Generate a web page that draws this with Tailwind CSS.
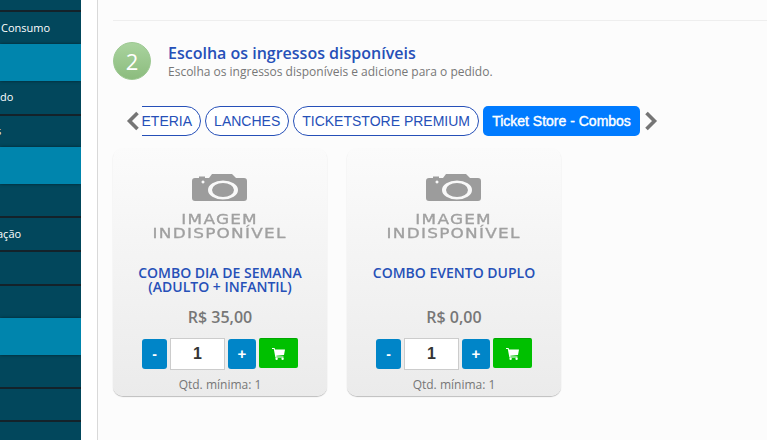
<!DOCTYPE html>
<html lang="en">

<head>
    <meta charset="UTF-8">
    <title>Ingressos</title>
    <script src="https://cdn.jsdelivr.net/npm/@tailwindcss/browser@4"></script>
</head>

<body class="bg-white font-['Open_Sans',sans-serif] overflow-hidden">
    <div class="flex w-[767px] h-[440px] overflow-hidden">

        <!-- Sidebar -->
        <div class="w-[81px] h-[440px] shrink-0 flex flex-col bg-[#02475c] text-white text-[11px] overflow-hidden">
            <div class="h-[10px] shrink-0"></div>
            <div class="h-[34px] shrink-0 border-t-2 border-[#14222a] flex items-center whitespace-nowrap pt-[1px]"><span class="ml-[1px]">Consumo</span></div>
            <div class="h-[37px] shrink-0 bg-[#0085ad] shadow-[0_0_3px_rgba(0,0,0,0.5)]"></div>
            <div class="h-[33px] shrink-0 flex items-center justify-start"><span>do</span></div>
            <div class="h-[33px] shrink-0 border-t-2 border-[#14222a] flex items-center"><span class="-ml-[4px]">s</span></div>
            <div class="h-[37px] shrink-0 bg-[#0085ad] shadow-[0_0_3px_rgba(0,0,0,0.5)]"></div>
            <div class="h-[32px] shrink-0"></div>
            <div class="h-[34px] shrink-0 border-t-2 border-[#14222a] flex items-center"><span class="-ml-[3px]">ação</span></div>
            <div class="h-[34px] shrink-0 border-t-2 border-[#14222a]"></div>
            <div class="h-[34px] shrink-0 border-t-2 border-[#14222a]"></div>
            <div class="h-[37px] shrink-0 bg-[#0085ad] shadow-[0_0_3px_rgba(0,0,0,0.5)]"></div>
            <div class="h-[32px] shrink-0"></div>
            <div class="h-[33px] shrink-0 border-t-2 border-[#14222a]"></div>
            <div class="flex-1 border-t-2 border-[#14222a]"></div>
        </div>

        <!-- Gutter -->
        <div class="w-[16px] shrink-0 bg-white"></div>

        <!-- Content -->
        <div class="flex-1 min-w-0 bg-[#fcfcfc] border-l border-[#d9d9d9] pl-[15px]">
            <div class="h-[21px] border-b border-[#eeeeee]"></div>

            <!-- Step header -->
            <div class="flex items-center gap-[17px] mt-[21px] h-[38px]">
                <div class="w-[38px] h-[38px] shrink-0 rounded-full bg-gradient-to-b from-[#a9d39e] to-[#8cbc7e] border border-[#9cc891] flex items-center justify-center text-white text-[22px]">2</div>
                <div class="pt-[1px]">
                    <h2 class="text-[16px] leading-[20px] font-semibold text-[#2650b8] whitespace-nowrap">Escolha os ingressos disponíveis</h2>
                    <p class="text-[12px] leading-[17px] text-[#777777] whitespace-nowrap">Escolha os ingressos disponíveis e adicione para o pedido.</p>
                </div>
            </div>

            <!-- Tabs -->
            <div class="flex items-center mt-[26px] h-[30px] font-['Liberation_Sans',sans-serif] text-[14px]">
                <svg class="w-[14px] h-[20px] ml-[13px] shrink-0" viewBox="0 0 14 20" fill="none" stroke="#757575" stroke-width="3.6"><path d="M11.5 2 L3.5 10 L11.5 18" /></svg>
                <div class="w-[498px] ml-[2px] shrink-0 flex justify-end gap-[4px] overflow-hidden">
                    <span class="shrink-0 h-[30px] px-[8px] flex items-center rounded-full border border-[#2650b8] text-[#2650b8] bg-white">CAFETERIA</span>
                    <span class="shrink-0 h-[30px] px-[8px] flex items-center rounded-full border border-[#2650b8] text-[#2650b8] bg-white">LANCHES</span>
                    <span class="shrink-0 h-[30px] px-[8px] flex items-center rounded-full border border-[#2650b8] text-[#2650b8] bg-white">TICKETSTORE PREMIUM</span>
                    <span class="shrink-0 h-[30px] w-[157px] justify-center flex items-center rounded-[5px] bg-[#007bff] text-white [-webkit-text-stroke:0.4px_#ffffff]">Ticket Store - Combos</span>
                </div>
                <svg class="w-[14px] h-[20px] ml-[4px] shrink-0" viewBox="0 0 14 20" fill="none" stroke="#757575" stroke-width="3.6"><path d="M2.5 2 L10.5 10 L2.5 18" /></svg>
            </div>

            <!-- Cards -->
            <div class="flex gap-[20px] mt-[12px]">
                <div class="w-[214px] h-[248px] shrink-0 rounded-[10px] bg-gradient-to-b from-[#fbfbfb] to-[#ebebeb] shadow-[0_1px_1px_rgba(0,0,0,0.25)] flex flex-col items-center">
                    <div class="h-[102px] pt-[26px] flex flex-col items-center text-[#a0a0a0] blur-[0.4px] font-['DejaVu_Sans',sans-serif] [-webkit-text-stroke:0.3px_#a0a0a0]">
                        <svg class="w-[55px] h-[27px]" viewBox="0 0 55 27"><path fill="#9c9c9c" fill-rule="evenodd" d="M3 4 H7 V2.5 H13 V4 H17 L20 0 H40 L44 4 H52 Q55 4 55 7 V24 Q55 27 52 27 H3 Q0 27 0 24 V7 Q0 4 3 4 Z M31 6.5 A15 9.5 0 1 0 31 25.500 A15 9.500 0 1 0 31 6.500 Z M31 9 A11 7 0 1 1 31 23 A11 7 0 1 1 31 9 Z M11 6.500 a1.500 1.500 0 1 0 0.010 0 Z" /></svg>
                        <span class="mt-[11px] text-[13.5px] leading-[14px] tracking-[1px] scale-x-[1.25]">IMAGEM</span>
                        <span class="text-[13.5px] leading-[15px] tracking-[1px] whitespace-nowrap scale-x-[1.25]">INDISPONÍVEL</span>
                    </div>
                    <h3 class="mt-[16px] h-[28px] w-full text-center text-[14px] leading-[14px] font-semibold text-[#2650b8]">COMBO DIA DE SEMANA<br>(ADULTO + INFANTIL)</h3>
                    <p class="mt-[12px] h-[22px] text-[16px] leading-[22px] font-semibold text-[#777777]">R$ 35,00</p>
                    <div class="flex items-start gap-[3px] mt-[10px] h-[32px] font-['Liberation_Sans',sans-serif]">
                        <button class="w-[25px] h-[30px] mt-[1px] rounded-[3px] bg-[#0085c8] text-white text-[14px] font-bold">-</button>
                        <input class="w-[55px] h-[32px] border border-[#cccccc] bg-white text-center text-[16px] font-bold text-[#333333]" value="1">
                        <button class="w-[28px] h-[30px] mt-[1px] rounded-[3px] bg-[#0085c8] text-white text-[15px] font-bold">+</button>
                        <button class="w-[39px] h-[30px] rounded-[2px] bg-[#00c000] border-t border-[#00a800] flex items-center justify-center">
                            <svg class="w-[13px] h-[12px]" viewBox="0 0 13 12" fill="#ffffff"><path d="M0 0 H2.600 L3 1.500 H13 L12 7 L4.300 7.800 L4.500 8.500 H11.500 V9.500 H3.400 L1.800 1 H0 Z" /><circle cx="4.600" cy="10.800" r="1.200" /><circle cx="10.600" cy="10.800" r="1.200" /></svg>
                        </button>
                    </div>
                    <p class="mt-[7px] text-[12px] leading-[16px] text-[#777777]">Qtd. mínima: 1</p>
                </div>

                <div class="w-[214px] h-[248px] shrink-0 rounded-[10px] bg-gradient-to-b from-[#fbfbfb] to-[#ebebeb] shadow-[0_1px_1px_rgba(0,0,0,0.25)] flex flex-col items-center">
                    <div class="h-[102px] pt-[26px] flex flex-col items-center text-[#a0a0a0] blur-[0.4px] font-['DejaVu_Sans',sans-serif] [-webkit-text-stroke:0.3px_#a0a0a0]">
                        <svg class="w-[55px] h-[27px]" viewBox="0 0 55 27"><path fill="#9c9c9c" fill-rule="evenodd" d="M3 4 H7 V2.5 H13 V4 H17 L20 0 H40 L44 4 H52 Q55 4 55 7 V24 Q55 27 52 27 H3 Q0 27 0 24 V7 Q0 4 3 4 Z M31 6.5 A15 9.5 0 1 0 31 25.500 A15 9.500 0 1 0 31 6.500 Z M31 9 A11 7 0 1 1 31 23 A11 7 0 1 1 31 9 Z M11 6.500 a1.500 1.500 0 1 0 0.010 0 Z" /></svg>
                        <span class="mt-[11px] text-[13.5px] leading-[14px] tracking-[1px] scale-x-[1.25]">IMAGEM</span>
                        <span class="text-[13.5px] leading-[15px] tracking-[1px] whitespace-nowrap scale-x-[1.25]">INDISPONÍVEL</span>
                    </div>
                    <h3 class="mt-[16px] h-[28px] w-full text-center text-[14px] leading-[14px] font-semibold text-[#2650b8]">COMBO EVENTO DUPLO</h3>
                    <p class="mt-[12px] h-[22px] text-[16px] leading-[22px] font-semibold text-[#777777]">R$ 0,00</p>
                    <div class="flex items-start gap-[3px] mt-[10px] h-[32px] font-['Liberation_Sans',sans-serif]">
                        <button class="w-[25px] h-[30px] mt-[1px] rounded-[3px] bg-[#0085c8] text-white text-[14px] font-bold">-</button>
                        <input class="w-[55px] h-[32px] border border-[#cccccc] bg-white text-center text-[16px] font-bold text-[#333333]" value="1">
                        <button class="w-[28px] h-[30px] mt-[1px] rounded-[3px] bg-[#0085c8] text-white text-[15px] font-bold">+</button>
                        <button class="w-[39px] h-[30px] rounded-[2px] bg-[#00c000] border-t border-[#00a800] flex items-center justify-center">
                            <svg class="w-[13px] h-[12px]" viewBox="0 0 13 12" fill="#ffffff"><path d="M0 0 H2.600 L3 1.500 H13 L12 7 L4.300 7.800 L4.500 8.500 H11.500 V9.500 H3.400 L1.800 1 H0 Z" /><circle cx="4.600" cy="10.800" r="1.200" /><circle cx="10.600" cy="10.800" r="1.200" /></svg>
                        </button>
                    </div>
                    <p class="mt-[7px] text-[12px] leading-[16px] text-[#777777]">Qtd. mínima: 1</p>
                </div>
            </div>
        </div>
    </div>
</body>

</html>
